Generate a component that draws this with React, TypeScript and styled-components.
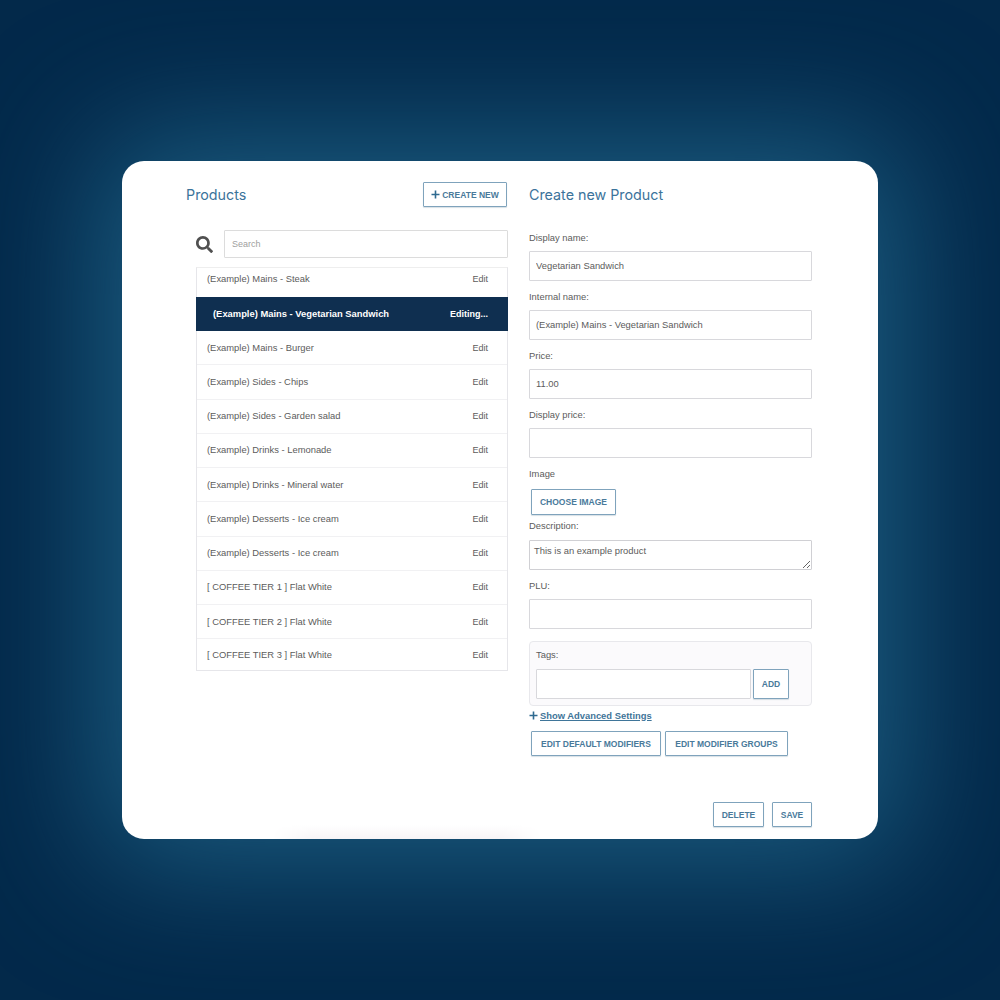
import React from 'react'
import styled, { createGlobalStyle } from 'styled-components'
import { FaSearch } from 'react-icons/fa'

const products = [
    { name: '(Example) Mains - Vegetarian Sandwich', active: true },
    { name: '(Example) Mains - Burger' },
    { name: '(Example) Sides - Chips' },
    { name: '(Example) Sides - Garden salad' },
    { name: '(Example) Drinks - Lemonade' },
    { name: '(Example) Drinks - Mineral water' },
    { name: '(Example) Desserts - Ice cream' },
    { name: '(Example) Desserts - Ice cream' },
    { name: '[ COFFEE TIER 1 ] Flat White' },
    { name: '[ COFFEE TIER 2 ] Flat White' },
    { name: '[ COFFEE TIER 3 ] Flat White' },
]

const fields = [
    { label: 'Display name:', value: 'Vegetarian Sandwich' },
    { label: 'Internal name:', value: '(Example) Mains - Vegetarian Sandwich' },
    { label: 'Price:', value: '11.00' },
    { label: 'Display price:', value: '' },
]

const PlusIcon = () => (
    <svg width="9" height="9" viewBox="0 0 9 9">
        <path d="M4.5 0.5v8M0.5 4.5h8" stroke="#2f6a90" strokeWidth="1.6" fill="none" />
    </svg>
)

const App = () => {
    return (
        <Page>
            <GlobalStyle />
            <Card>
                <Columns>
                    <LeftColumn>
                        <ColumnHeader>
                            <Title>Products</Title>
                            <CreateButton>
                                <PlusIcon />
                                CREATE NEW
                            </CreateButton>
                        </ColumnHeader>
                        <SearchRow>
                            <FaSearch size={17} color="#505050" />
                            <SearchInput placeholder="Search" readOnly />
                        </SearchRow>
                        <List>
                            <FirstRow>
                                <RowName>(Example) Mains - Steak</RowName>
                                <RowAction>Edit</RowAction>
                            </FirstRow>
                            {products.map((p, i) =>
                                p.active ? (
                                    <ActiveRow key={i}>
                                        <ActiveName>{p.name}</ActiveName>
                                        <ActiveAction>Editing...</ActiveAction>
                                    </ActiveRow>
                                ) : (
                                    <Row key={i}>
                                        <RowName>{p.name}</RowName>
                                        <RowAction>Edit</RowAction>
                                    </Row>
                                )
                            )}
                        </List>
                    </LeftColumn>

                    <RightColumn>
                        <RightHeader>
                            <Title>Create new Product</Title>
                        </RightHeader>
                        {fields.map(f => (
                            <Field key={f.label}>
                                <Label>{f.label}</Label>
                                <TextInput value={f.value} readOnly />
                            </Field>
                        ))}
                        <Label>Image</Label>
                        <ChooseButton>CHOOSE IMAGE</ChooseButton>
                        <DescriptionLabel>Description:</DescriptionLabel>
                        <Description value="This is an example product" readOnly />
                        <Field>
                            <Label>PLU:</Label>
                            <TextInput readOnly />
                        </Field>
                        <TagsPanel>
                            <TagsLabel>Tags:</TagsLabel>
                            <TagsRow>
                                <TagsInput readOnly />
                                <AddButton>ADD</AddButton>
                            </TagsRow>
                        </TagsPanel>
                        <AdvancedLink>
                            <PlusIcon />
                            <span>Show Advanced Settings</span>
                        </AdvancedLink>
                        <ModifierRow>
                            <OutlineButton $width={130}>EDIT DEFAULT MODIFIERS</OutlineButton>
                            <OutlineButton $width={123}>EDIT MODIFIER GROUPS</OutlineButton>
                        </ModifierRow>
                    </RightColumn>
                </Columns>
                <Footer>
                    <OutlineButton $width={51}>DELETE</OutlineButton>
                    <OutlineButton $width={40}>SAVE</OutlineButton>
                </Footer>
            </Card>
        </Page>
    )
}

export default App

const GlobalStyle = createGlobalStyle`
    html, body {
        margin: 0;
        padding: 0;
    }
    * {
        box-sizing: border-box;
    }
`
const Page = styled.div`
    width: 1000px;
    height: 1000px;
    padding-top: 161px;
    padding-left: 122px;
    overflow: hidden;

    background: #03294a;
    font-family: "Liberation Sans", Arial, sans-serif;
`
const Card = styled.div`
    position: relative;
    width: 756px;
    height: 678px;
    padding: 21px 66px 0 64px;

    background: #fff;
    border-radius: 22px;
    box-shadow: 0 0 130px 25px #1b5c80;

    &::after {
        content: '';
        position: absolute;
        left: 150px;
        bottom: 0;
        width: 270px;
        height: 14px;
        background: linear-gradient(to top, #f7f4f6, #fff);
        mask-image: linear-gradient(to right, transparent, #000 15%, #000 85%, transparent);
    }
`
const Columns = styled.div`
    display: flex;
    gap: 21px;
`
const LeftColumn = styled.div`
    width: 322px;
`
const RightColumn = styled.div`
    width: 283px;
    display: flex;
    flex-direction: column;
    align-items: flex-start;
`
const ColumnHeader = styled.div`
    display: flex;
    align-items: center;
    justify-content: space-between;

    width: 321px;
    height: 25px;
    margin-bottom: 23px;
`
const RightHeader = styled(ColumnHeader)`
    width: 100%;
    margin-bottom: 24px;
`
const Title = styled.h2`
    margin: 0;
    font-family: Inter, sans-serif;
    font-size: 14.3px;
    font-weight: 400;
    color: #3b739b;
`
const OutlineButton = styled.button<{ $width: number }>`
    display: flex;
    align-items: center;
    justify-content: center;

    width: ${p => p.$width}px;
    height: 25px;
    padding: 0;

    background: #fff;
    border: 1px solid #7fa3bc;
    border-radius: 1px;
    box-shadow: 0 1px 1px rgba(60, 100, 130, 0.2);

    font-family: "Liberation Sans", Arial, sans-serif;
    font-size: 8.5px;
    font-weight: bold;
    color: #4a7a9b;
`
const CreateButton = styled(OutlineButton).attrs({ $width: 84 })`
    gap: 2px;
`
const SearchRow = styled.div`
    display: flex;
    align-items: center;
    gap: 11px;

    margin-left: 10px;
    margin-bottom: 9px;
`
const SearchInput = styled.input`
    width: 284px;
    height: 28px;
    padding: 0 7px;

    border: 1px solid #dcdcdc;
    border-radius: 1px;
    outline: none;

    font-family: inherit;
    font-size: 9px;
    color: #5c5c5c;

    &::placeholder {
        color: #a0a0a0;
    }
`
const List = styled.div`
    width: 312px;
    margin-left: 10px;

    border: 1px solid #e6e6ea;
    border-top-color: #eeeeee;
`
const Row = styled.div`
    display: flex;
    align-items: center;
    justify-content: space-between;

    height: 34.25px;
    padding: 0 19px 0 10px;
    border-bottom: 1px solid #f1f1f3;

    &:last-child {
        height: 31px;
        padding-top: 1px;
        border-bottom: none;
    }
`
const FirstRow = styled(Row)`
    height: 29px;
    padding-bottom: 8px;
    border-bottom: none;
`
const ActiveRow = styled(Row)`
    height: 34px;
    margin: 0 -1px;
    padding: 0 20px 1px 17px;
    background: #0f2f50;
    border-bottom: none;
`
const RowName = styled.span`
    font-size: 9.4px;
    line-height: 12px;
    color: #5c5c5c;
`
const RowAction = styled.span`
    font-size: 9px;
    line-height: 12px;
    color: #5c5c5c;
`
const ActiveName = styled(RowName)`
    font-weight: bold;
    color: #fff;
`
const ActiveAction = styled(RowAction)`
    font-weight: bold;
    color: #fff;
`
const Field = styled.div`
    width: 100%;
    margin-bottom: 9px;
`
const Label = styled.div`
    height: 14px;
    margin-bottom: 6px;

    font-size: 9.4px;
    line-height: 14px;
    color: #5c5c5c;
`
const DescriptionLabel = styled(Label)`
    margin-top: 4px;
    margin-bottom: 7px;
`
const TextInput = styled.input`
    display: block;
    width: 100%;
    height: 30px;
    padding: 0 6px 1px;

    border: 1px solid #d8d8dc;
    border-radius: 1px;
    outline: none;

    font-family: inherit;
    font-size: 9.4px;
    color: #5c5c5c;
`
const ChooseButton = styled(OutlineButton).attrs({ $width: 85 })`
    height: 26px;
    margin-left: 2px;
    margin-top: 2px;
`
const Description = styled.textarea`
    display: block;
    width: 100%;
    height: 30px;
    margin-bottom: 9px;
    padding: 4px;

    border: 1px solid #d0d0d4;
    border-radius: 1px;
    outline: none;

    font-family: inherit;
    font-size: 9.4px;
    color: #5c5c5c;
`
const TagsPanel = styled.div`
    width: 100%;
    height: 65px;
    margin-top: 3px;
    padding: 6px 6px 0;

    background: #fbfafc;
    border: 1px solid #e8e8ec;
    border-radius: 4px;
`
const TagsLabel = styled(Label)`
    margin-bottom: 7px;
`
const TagsRow = styled.div`
    display: flex;
    gap: 2px;
`
const TagsInput = styled(TextInput)`
    width: 215px;
`
const AddButton = styled(OutlineButton).attrs({ $width: 36 })`
    height: 30px;
`
const AdvancedLink = styled.a`
    display: flex;
    align-items: center;
    gap: 2px;

    height: 14px;
    margin-top: 2px;
    margin-bottom: 9px;

    font-size: 9.4px;
    font-weight: bold;
    color: #3f7599;
    text-decoration: underline;
`
const ModifierRow = styled.div`
    display: flex;
    gap: 4px;
    margin-left: 2px;
`
const Footer = styled.div`
    position: absolute;
    right: 66px;
    bottom: 12px;

    display: flex;
    gap: 8px;
`
